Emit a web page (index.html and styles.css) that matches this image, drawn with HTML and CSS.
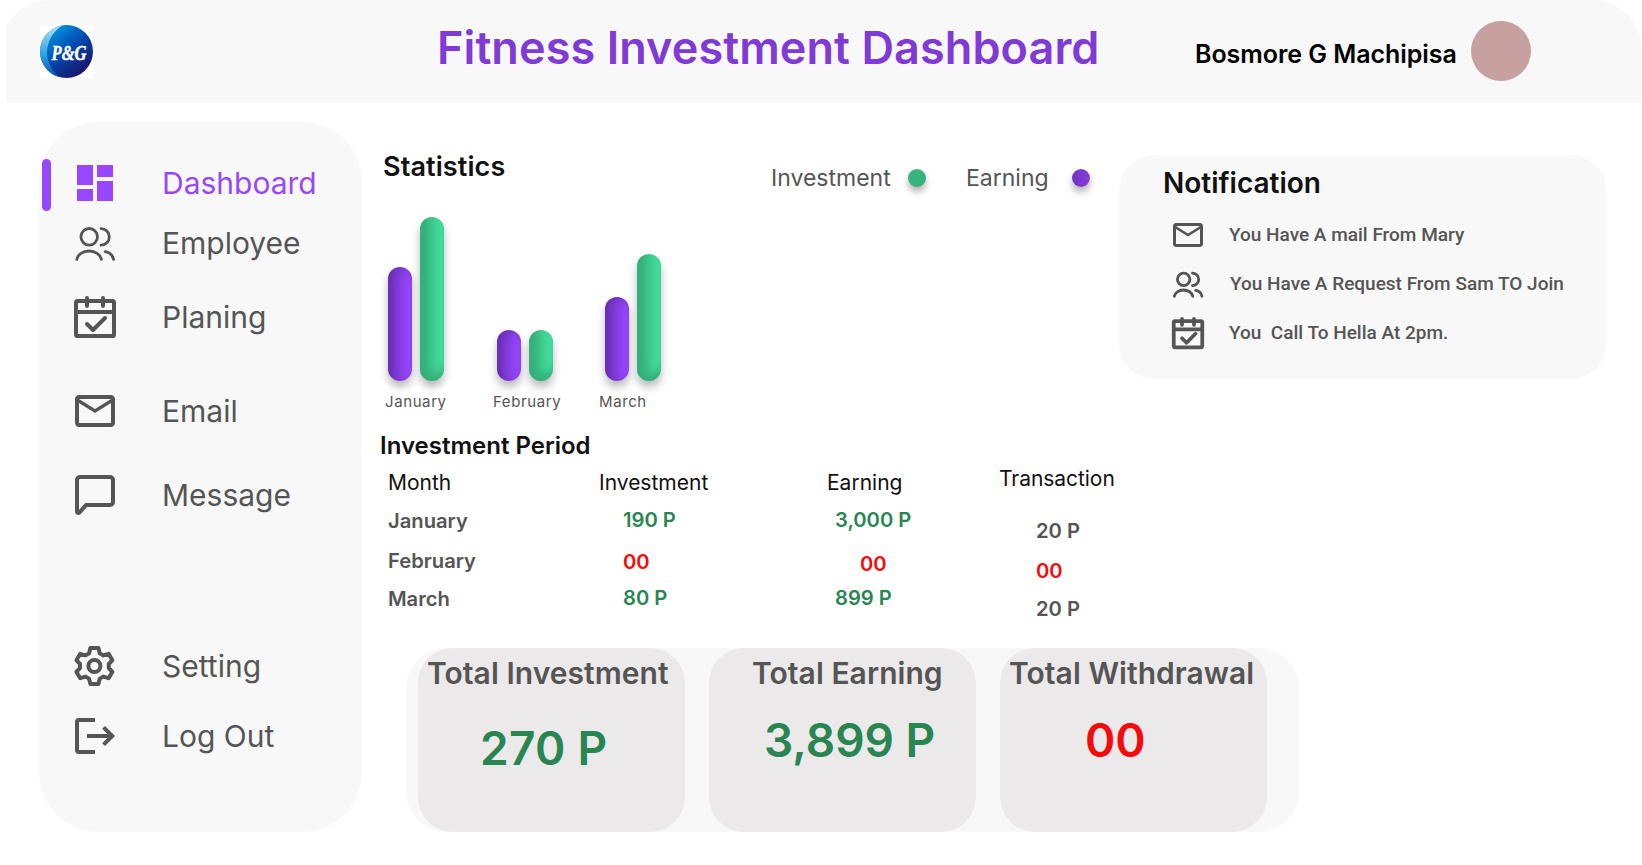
FILE: index.html
```html
<!DOCTYPE html>
<html lang="en">
<head>
<meta charset="utf-8">
<title>Fitness Investment Dashboard</title>
<link rel="stylesheet" href="styles.css">
</head>
<body>
<svg class="sprite" width="0" height="0" aria-hidden="true">
  <symbol id="i-users" viewBox="0 0 24 24"><g fill="none" stroke="currentColor" stroke-linecap="round" stroke-linejoin="round"><circle cx="9.100" cy="8.900" r="4.150"/><path d="M15 4.800a4.150 4.150 0 0 1 0 8.300M2.900 20.200C3.300 17.800 5.900 16 9 16s5.700 1.800 6.200 4.200M17.100 16.300c2.200.4 3.800 1.900 4.200 3.900"/></g></symbol>
  <symbol id="i-calendar" viewBox="0 0 24 24"><g fill="none" stroke="currentColor" stroke-linecap="round" stroke-linejoin="round"><rect x="2.500" y="4" width="19" height="17.500" rx=".8"/><path d="M3 9.500h18M8 2.500v4M16 2.500v4M8 15.500l3 3 6-6"/></g></symbol>
  <symbol id="i-mail" viewBox="0 0 24 24"><path fill="currentColor" d="M22 6c0-1.100-.9-2-2-2H4c-1.100 0-2 .9-2 2v12c0 1.100.9 2 2 2h16c1.100 0 2-.9 2-2V6zm-2 0-8 5-8-5h16zm0 12H4V8l8 5 8-5v10z"/></symbol>
</svg>

<header class="topbar">
  <svg class="logo" viewBox="0 0 53 53" role="img" aria-label="P&amp;G">
    <defs>
      <linearGradient id="lg1" x1="0.15" y1="0.1" x2="0.8" y2="0.95"><stop offset="0" stop-color="#0099e0"/><stop offset=".5" stop-color="#0046ad"/><stop offset="1" stop-color="#1b1464"/></linearGradient>
      <linearGradient id="lg2" x1="0" y1="0" x2="0" y2="1"><stop offset="0" stop-color="#b5e0f6"/><stop offset=".55" stop-color="#2fa5e0"/><stop offset="1" stop-color="#0053a8"/></linearGradient>
    </defs>
    <rect width="53" height="53" fill="#fff"/>
    <circle cx="26.500" cy="26.500" r="26.500" fill="url(#lg1)"/>
    <path d="M22 .4A26.500 26.500 0 0 0 20 52.200C3 40 2 14 22 .4z" fill="url(#lg2)"/>
    <text class="logo-text" x="11.500" y="34.500" textLength="35" lengthAdjust="spacingAndGlyphs">P&amp;G</text>
  </svg>
  <h1 class="title">Fitness Investment Dashboard</h1>
  <div class="user">Bosmore G Machipisa</div>
  <div class="avatar"></div>
</header>

<div class="layout">
  <nav class="sidebar">
    <a class="item active"><svg class="icon" viewBox="0 0 24 24"><path fill="currentColor" d="M3 13h8V3H3v10zm0 8h8v-6H3v6zm10 0h8V11h-8v10zm0-18v6h8V3h-8z"/></svg><span>Dashboard</span></a>
    <a class="item employee"><svg class="icon"><use href="#i-users"/></svg><span>Employee</span></a>
    <a class="item planing"><svg class="icon"><use href="#i-calendar"/></svg><span>Planing</span></a>
    <a class="item email"><svg class="icon"><use href="#i-mail"/></svg><span>Email</span></a>
    <a class="item message"><svg class="icon" viewBox="0 0 24 24"><path fill="none" stroke="currentColor" stroke-width="2" stroke-linejoin="round" d="M21 15.500a1.500 1.500 0 0 1-1.500 1.500H7.500L4.300 20.700C3.800 21.200 3 20.900 3 20.200V4.500A1.500 1.500 0 0 1 4.500 3h15A1.500 1.500 0 0 1 21 4.500z"/></svg><span>Message</span></a>
    <a class="item setting"><svg class="icon" viewBox="0 0 24 24"><g fill="none" stroke="currentColor" stroke-width="2" stroke-linejoin="round"><circle cx="11.700" cy="12" r="3"/><path d="M9.700 3h4l.7 2.700 1.700 1 2.700-.8 1.900 3.200L18.900 11v2l1.800 1.900-1.900 3.200-2.700-.8-1.700 1-.7 2.700h-4L9 18.300l-1.700-1-2.700.8-1.900-3.200L4.500 13v-2L2.700 9.100l1.900-3.200 2.700.8 1.700-1z"/></g></svg><span>Setting</span></a>
    <a class="item logout"><svg class="icon" viewBox="0 0 24 24"><path fill="none" stroke="currentColor" stroke-width="2" d="M12 4H4a1 1 0 0 0-1 1v14a1 1 0 0 0 1 1h8M8 12h12.500M16.300 7.700l4.300 4.300-4.300 4.300"/></svg><span>Log Out</span></a>
  </nav>

  <main class="main">
    <section class="stats">
      <h2 class="stats-title">Statistics</h2>
      <div class="legend">
        <span class="key-inv">Investment</span><i class="dot green"></i>
        <span class="key-earn">Earning</span><i class="dot purple"></i>
      </div>
    </section>
    <section class="chart">
      <div class="group jan"><div class="bars"><i class="bar purple" style="height:114px"></i><i class="bar green" style="height:164px"></i></div><span class="label">January</span></div>
      <div class="group feb"><div class="bars"><i class="bar purple" style="height:51px"></i><i class="bar green" style="height:51px"></i></div><span class="label">February</span></div>
      <div class="group mar"><div class="bars"><i class="bar purple" style="height:84px"></i><i class="bar green" style="height:127px"></i></div><span class="label">March</span></div>
    </section>
    <section class="period">
      <h2 class="period-title">Investment Period</h2>
      <div class="columns">
        <div class="col month"><span class="head">Month</span><span class="r1">January</span><span class="r2">February</span><span class="r3">March</span></div>
        <div class="col investment"><span class="head">Investment</span><span class="r1 pos">190 P</span><span class="r2 neg">00</span><span class="r3 pos">80 P</span></div>
        <div class="col earning"><span class="head">Earning</span><span class="r1 pos">3,000 P</span><span class="r2 neg">00</span><span class="r3 pos">899 P</span></div>
        <div class="col transaction"><span class="head">Transaction</span><span class="r1">20 P</span><span class="r2 neg">00</span><span class="r3">20 P</span></div>
      </div>
    </section>
    <section class="totals">
      <div class="card t-inv"><span class="name">Total Investment</span><span class="sum pos">270 P</span></div>
      <div class="card t-earn"><span class="name">Total Earning</span><span class="sum pos">3,899 P</span></div>
      <div class="card t-with"><span class="name">Total Withdrawal</span><span class="sum neg">00</span></div>
    </section>
  </main>

  <aside class="notes">
    <h2 class="notes-title">Notification</h2>
    <div class="note"><svg class="note-icon"><use href="#i-mail"/></svg><span>You Have A mail From Mary</span></div>
    <div class="note second"><svg class="note-icon users"><use href="#i-users"/></svg><span>You Have A Request From Sam TO Join</span></div>
    <div class="note third"><svg class="note-icon"><use href="#i-calendar"/></svg><span>You  Call To Hella At 2pm.</span></div>
  </aside>
</div>
</body>
</html>
```
FILE: styles.css
```css
* { box-sizing: border-box; }
body { margin: 0; width: 1642px; height: 865px; overflow: hidden; background: #fff; font-family: Inter, "Liberation Sans", sans-serif; color: #555; }
h1, h2 { margin: 0; font-weight: 600; white-space: nowrap; }
span { white-space: pre; }
.sprite { position: absolute; }

.topbar { display: flex; height: 103px; padding-left: 40px; border-radius: 50px 50px 0 0; background: #f8f8f8; clip-path: inset(0 0 0 6px); }
.logo { width: 53px; height: 53px; margin-top: 25px; flex: none; overflow: visible; }
.logo-text { font: italic 700 22px "Liberation Serif", serif; fill: #fff; stroke: #fff; stroke-width: .5px; }
.title { width: 758px; padding-left: 344px; margin-top: 20px; font-size: 45px; line-height: 56px; letter-spacing: .08px; color: #803ad6; }
.user { width: 276px; margin-top: 39px; margin-left: 344px; font-size: 25px; line-height: 30px; font-weight: 600; letter-spacing: -.05px; color: #000; }
.avatar { width: 60px; height: 60px; margin-top: 21px; border-radius: 50%; background: #c7a1a0; }

.layout { display: flex; align-items: flex-start; padding-left: 39px; }
.sidebar { width: 323px; height: 710px; margin-top: 19px; padding: 35px 0 0 32px; border-radius: 60px; background: #f8f8f8; }
.item { position: relative; display: flex; align-items: center; height: 52px; font-size: 30px; line-height: 36px; }
.icon { width: 48px; height: 48px; margin-right: 43px; stroke-width: 2; }
.active { color: #9747ff; }
.active::before { content: ""; position: absolute; left: -29px; top: 2px; width: 9px; height: 52px; border-radius: 5px; background: #9747ff; }
.employee { margin-top: 8px; }
.employee .icon { stroke-width: 1.400; }
.planing { margin-top: 22px; }
.email { margin-top: 42px; }
.message { margin-top: 32px; }
.setting { margin-top: 119px; }
.logout { margin-top: 18px; }

.main { width: 757px; }
.stats { display: flex; height: 114px; padding: 49px 0 0 21px; }
.stats-title { width: 388px; font-size: 27px; line-height: 30px; letter-spacing: .1px; color: #111; }
.legend { display: flex; align-items: center; height: 30px; margin-top: 11px; font-size: 23px; line-height: 30px; }
.key-inv { width: 137px; }
.key-earn { width: 106px; margin-left: 40px; }
.dot { width: 18px; height: 18px; border-radius: 50%; box-shadow: 0 5px 7px rgba(0,0,0,.3); }
.dot.green { background: #36b37e; }
.dot.purple { background: linear-gradient(90deg, #7233c0, #853ddd); }

.chart { display: flex; height: 212px; }
.group { display: flex; flex-direction: column; }
.jan { width: 109px; padding-left: 23px; }
.feb { width: 106px; padding-left: 22px; }
.mar { padding-left: 22px; }
.bars { display: flex; align-items: flex-end; gap: 8px; height: 164px; padding-left: 3px; }
.feb .bars { padding-left: 4px; }
.mar .bars { padding-left: 6px; }
.bar { width: 24px; border-radius: 12px; }
.bar.purple { background: linear-gradient(90deg, #7233c0 10%, #9747ff 85%); box-shadow: 0 6px 8px rgba(0,0,0,.28), inset 2px 3px 8px rgba(90,35,150,.4); }
.bar.green { background: linear-gradient(90deg, #36b07c 15%, #43e4a0 90%); box-shadow: 0 6px 8px rgba(0,0,0,.28), inset 0 -9px 10px -2px #36ae7c; }
.label { margin-top: 11px; font-size: 15px; line-height: 20px; letter-spacing: .6px; }

.period { height: 217px; }
.period-title { padding-left: 18px; margin-top: 2px; font-size: 24px; line-height: 30px; color: #111; }
.columns { display: flex; padding-left: 26px; }
.col { display: flex; flex-direction: column; font-size: 20.200px; line-height: 24px; font-weight: 600; }
.head { font-size: 21px; font-weight: 400; color: #111; margin-top: 9.500px; }
.month { width: 211px; }
.month .r1 { margin-top: 14.500px; }
.month .r2 { margin-top: 16px; }
.month .r3 { margin-top: 14px; }
.investment { width: 228px; }
.investment .r1, .investment .r2, .investment .r3 { padding-left: 24px; }
.investment .r1 { margin-top: 13.500px; }
.investment .r2 { margin-top: 18px; }
.investment .r3 { margin-top: 12px; }
.earning { width: 172px; }
.earning .r1, .earning .r3 { padding-left: 8px; }
.earning .r1 { margin-top: 13.500px; }
.earning .r2 { margin-top: 20px; padding-left: 33px; }
.earning .r3 { margin-top: 10px; }
.transaction .head { margin-top: 6px; letter-spacing: -.05px; }
.transaction .r1, .transaction .r2, .transaction .r3 { padding-left: 37px; }
.transaction .r1 { margin-top: 28px; }
.transaction .r2 { margin-top: 16px; }
.transaction .r3 { margin-top: 14px; }
.pos { color: #298552; }
.neg { color: #f40b0b; }

.totals { display: flex; gap: 24px; width: 893px; height: 184px; margin-left: 44px; padding-left: 12px; border-radius: 40px; background: #f8f8f8; }
.card { display: flex; flex-direction: column; width: 267px; height: 184px; border-radius: 35px; background: #ebe9ea; font-weight: 600; }
.name { margin-top: 7px; font-size: 30px; line-height: 36px; padding-left: 9px; letter-spacing: .05px; }
.sum { margin-top: 19px; font-size: 46px; line-height: 60px; }
.t-inv .sum { margin-top: 26.500px; padding-left: 62px; letter-spacing: .3px; }
.t-earn .name { padding-left: 43px; }
.t-earn .sum { padding-left: 55px; }
.t-with .sum { padding-left: 85px; }

.notes { width: 487px; height: 224px; margin-top: 52px; padding: 12px 0 0 44px; border-radius: 35px; background: #f8f8f8; }
.notes-title { font-size: 28px; line-height: 32px; color: #111; }
.note { display: flex; align-items: center; height: 36px; margin-top: 18px; padding-left: 7px; font: 500 19px/24px Roboto, sans-serif; }
.note-icon { width: 36px; height: 36px; margin-right: 23px; stroke-width: 2.500; }
.second, .third { margin-top: 13px; }
.note-icon.users { margin-right: 24px; stroke-width: 1.900; }
```
